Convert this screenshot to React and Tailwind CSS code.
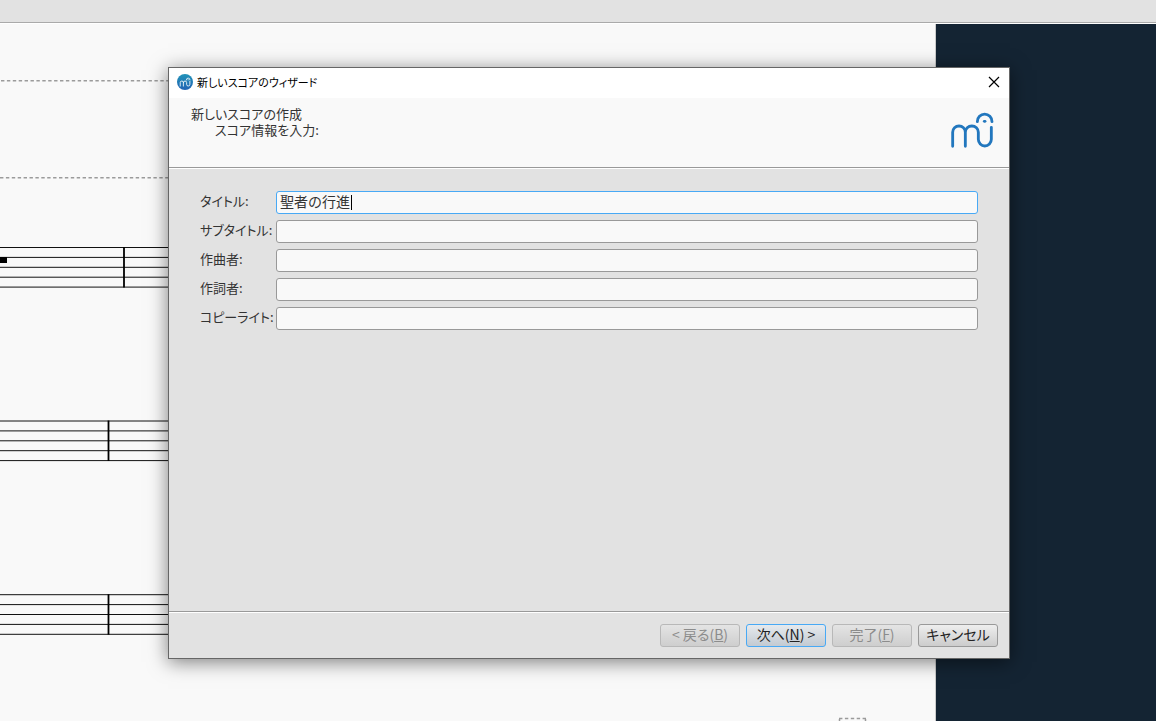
import React, { useState } from 'react';

const fields = [
  { id: 'title', label: 'タイトル:' },
  { id: 'subtitle', label: 'サブタイトル:' },
  { id: 'composer', label: '作曲者:' },
  { id: 'lyricist', label: '作詞者:' },
  { id: 'copyright', label: 'コピーライト:' },
];

// top line of each staff and the x of its barline
const staves = [
  { y: 223.5, bar: 124 },
  { y: 397, bar: 108.5 },
  { y: 570.7, bar: 108.5 },
];

const LogoPaths = () => (
  <>
    <path d="M98 259V217a19 19 0 0 1 38 0V259M136 217a19.5 19 0 0 1 39 0V238a19.5 20 0 0 0 39 0V202" />
    <path d="M172 185a22 22.5 0 0 1 44 0" />
    <path d="M193 184h2" />
  </>
);

const Logo = () => (
  <svg
    className="w-[45px] h-[38px]"
    viewBox="90 150 135 114"
    fill="none"
    stroke="#2277be"
    strokeWidth="8.5"
    strokeLinecap="round"
    aria-hidden="true"
  >
    <LogoPaths />
  </svg>
);

const AppIcon = () => (
  <svg className="w-4 h-4" viewBox="0 0 16 16" aria-hidden="true">
    <defs>
      <linearGradient id="disc" x1="0" y1="0" x2="0" y2="1">
        <stop offset="0" stopColor="#2193b8" />
        <stop offset="1" stopColor="#2264b4" />
      </linearGradient>
    </defs>
    <circle cx="8" cy="8" r="8" fill="url(#disc)" />
    <g
      transform="translate(-4.9 -9.4) scale(.083)"
      fill="none"
      stroke="#fff"
      strokeWidth="10"
      strokeLinecap="round"
    >
      <LogoPaths />
    </g>
  </svg>
);

const Score = () => (
  <svg className="w-full h-full" aria-hidden="true">
    <g stroke="#9b9b9b" strokeWidth="1.5" strokeDasharray="3.4 2.5">
      <path d="M1 56.7H860" />
      <path d="M0 153.7H860" />
      <path d="M839 694.5H866M839.5 695v6M865.5 695v6" />
    </g>
    {staves.map(({ y, bar }) => (
      <g key={y} stroke="#111">
        {[0, 1, 2, 3, 4].map((n) => (
          <line key={n} x1="0" x2="800" y1={y + n * 9.9} y2={y + n * 9.9} />
        ))}
        <line x1={bar} x2={bar} y1={y - 0.5} y2={y + 40} stroke="#000" strokeWidth="1.8" />
      </g>
    ))}
    <rect x="0" y="233" width="7" height="6" />
  </svg>
);

const WizardButton = ({ children, disabled, primary }) => (
  <button
    disabled={disabled}
    className={`min-w-20 h-[23px] pb-0.5 border rounded-[3px] whitespace-nowrap leading-[19px] bg-linear-to-b ${
      primary
        ? 'border-[#48a9f5] from-[#e6eaee] to-[#c3cad2] text-[#222]'
        : disabled
          ? 'border-[#b8b8b8] from-[#e4e4e4] to-[#cecece] text-[#8c8c8c]'
          : 'border-[#999] from-[#eee] to-[#ccc] text-[#222]'
    }`}
  >
    {children}
  </button>
);

const Field = ({ id, label, value, active, onFocus, onChange }) => (
  <div className="flex h-[23px]">
    <label htmlFor={id} className="w-[76px] shrink-0 whitespace-nowrap text-[13px] leading-5">
      {label}
    </label>
    <div className="relative flex flex-1 min-w-0">
      <input
        id={id}
        type="text"
        value={value}
        onFocus={onFocus}
        onChange={onChange}
        className={`flex-1 min-w-0 px-[3px] pb-0.5 leading-[19px] rounded-[3px] border bg-[#f9f9f9] outline-none caret-transparent [font-feature-settings:normal] ${
          active ? 'border-[#48a9f5]' : 'border-[#999]'
        }`}
      />
      {/* full-width text, so the caret moves one em per character */}
      {active && (
        <span
          className="absolute top-1 w-px h-[15px] bg-black"
          style={{ left: `calc(5px + ${value.length}em)` }}
        />
      )}
    </div>
  </div>
);

const Wizard = () => {
  const [values, setValues] = useState({ title: '聖者の行進' });
  const [active, setActive] = useState('title');

  return (
    <div
      role="dialog"
      aria-labelledby="wizard-title"
      className="absolute left-[168px] right-[146px] top-[67px] bottom-[62px] flex flex-col border border-[#666] bg-[#e2e2e2] shadow-[0_3px_18px_rgba(0,0,0,0.5)]"
    >
      <div className="flex items-center h-[30px] shrink-0 bg-white px-2 pb-0.5">
        <AppIcon />
        <h1 id="wizard-title" className="ml-1 text-[11px] leading-4 text-black">
          新しいスコアのウィザード
        </h1>
        <button aria-label="閉じる" className="ml-auto p-px">
          <svg className="w-3 h-3" viewBox="0 0 12 12" stroke="#000" strokeWidth="1.2" aria-hidden="true">
            <path d="M1 1l10 10M11 1L1 11" />
          </svg>
        </button>
      </div>

      <header className="flex justify-between h-[70px] shrink-0 bg-[#f9f9f9] border-b border-[#999] pl-[22px] pr-3.5">
        <div className="pt-2 text-[13px] leading-4">
          <h2>新しいスコアの作成</h2>
          <p className="pl-6">スコア情報を入力:</p>
        </div>
        <div className="pt-3">
          <Logo />
        </div>
      </header>

      <form className="flex-1 flex flex-col gap-1.5 border-t border-white pt-[22px] pl-[31px] pr-[31px]">
        {fields.map(({ id, label }) => (
          <Field
            key={id}
            id={id}
            label={label}
            value={values[id] || ''}
            active={active === id}
            onFocus={() => setActive(id)}
            onChange={(e) => setValues({ ...values, [id]: e.target.value })}
          />
        ))}
      </form>

      <footer className="border-t border-[#999]">
        <div className="flex justify-end gap-1.5 border-t border-white py-[11px] pr-[11px]">
          <WizardButton disabled>
            &lt; 戻る(<u>B</u>)
          </WizardButton>
          <WizardButton primary>
            次へ(<u>N</u>) &gt;
          </WizardButton>
          <WizardButton disabled>
            完了(<u>F</u>)
          </WizardButton>
          <WizardButton>キャンセル</WizardButton>
        </div>
      </footer>
    </div>
  );
};

const App = () => (
  <div className="relative flex flex-col h-screen overflow-hidden bg-[#142433] text-[14px] text-[#333] font-['Noto_Sans_CJK_JP',sans-serif] [font-feature-settings:'palt']">
    <div className="h-[23px] shrink-0 bg-[#e2e2e2] border-b border-[#aaa]" />
    <main className="flex-1 min-h-0 flex border-t border-white">
      <div className="flex-1 bg-[#f9f9f9] border-r border-[#ccc]">
        <Score />
      </div>
      <div className="w-[220px]" />
    </main>
    <Wizard />
  </div>
);

export default App;
